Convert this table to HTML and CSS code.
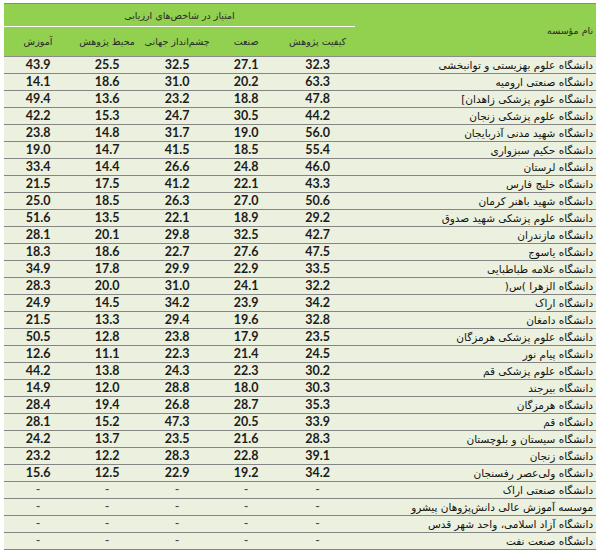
FILE: index.html
```html
<!DOCTYPE html>
<html lang="fa">
<head>
<meta charset="utf-8">
<link rel="stylesheet" href="styles.css">
</head>
<body>
<table class="grid" dir="rtl">
  <colgroup>
    <col class="c-name"><col class="c-q"><col class="c-ind"><col class="c-glob"><col class="c-env"><col class="c-edu">
  </colgroup>
  <thead>
    <tr class="h1">
      <th class="hname" rowspan="2">نام مؤسسه</th>
      <th class="hgroup" colspan="5">امتیاز در شاخص‌های ارزیابی</th>
    </tr>
    <tr class="h2">
      <th>کیفیت پژوهش</th>
      <th>صنعت</th>
      <th>چشم‌انداز جهانی</th>
      <th>محیط پژوهش</th>
      <th>آموزش</th>
    </tr>
  </thead>
  <tbody>
    <tr><td class="name">دانشگاه علوم بهزیستی و توانبخشی</td><td>32.3</td><td>27.1</td><td>32.5</td><td>25.5</td><td>43.9</td></tr>
    <tr><td class="name">دانشگاه صنعتی ارومیه</td><td>63.3</td><td>20.2</td><td>31.0</td><td>18.6</td><td>14.1</td></tr>
    <tr><td class="name">دانشگاه علوم پزشکی زاهدان]</td><td>47.8</td><td>18.8</td><td>23.2</td><td>13.6</td><td>49.4</td></tr>
    <tr><td class="name">دانشگاه علوم پزشکی زنجان</td><td>44.2</td><td>30.5</td><td>24.7</td><td>15.3</td><td>42.2</td></tr>
    <tr><td class="name">دانشگاه شهید مدنی آذربایجان</td><td>56.0</td><td>19.0</td><td>31.7</td><td>14.8</td><td>23.8</td></tr>
    <tr><td class="name">دانشگاه حکیم سبزواری</td><td>55.4</td><td>18.5</td><td>41.5</td><td>14.7</td><td>19.0</td></tr>
    <tr><td class="name">دانشگاه لرستان</td><td>46.0</td><td>24.8</td><td>26.6</td><td>14.4</td><td>33.4</td></tr>
    <tr><td class="name">دانشگاه خلیج فارس</td><td>43.3</td><td>22.1</td><td>41.2</td><td>17.5</td><td>21.5</td></tr>
    <tr><td class="name">دانشگاه شهید باهنر کرمان</td><td>50.6</td><td>27.0</td><td>26.3</td><td>18.5</td><td>25.0</td></tr>
    <tr><td class="name">دانشگاه علوم پزشکی شهید صدوق</td><td>29.2</td><td>18.9</td><td>22.1</td><td>13.5</td><td>51.6</td></tr>
    <tr><td class="name">دانشگاه مازندران</td><td>42.7</td><td>32.5</td><td>29.8</td><td>20.1</td><td>28.1</td></tr>
    <tr><td class="name">دانشگاه یاسوج</td><td>47.5</td><td>27.6</td><td>22.7</td><td>18.6</td><td>18.3</td></tr>
    <tr><td class="name">دانشگاه علامه طباطبایی</td><td>33.5</td><td>22.9</td><td>29.9</td><td>17.8</td><td>34.9</td></tr>
    <tr><td class="name">دانشگاه الزهرا )س(</td><td>32.2</td><td>24.1</td><td>31.0</td><td>20.0</td><td>28.3</td></tr>
    <tr><td class="name">دانشگاه اراک</td><td>34.2</td><td>23.9</td><td>34.2</td><td>14.5</td><td>24.9</td></tr>
    <tr><td class="name">دانشگاه دامغان</td><td>32.8</td><td>19.6</td><td>29.4</td><td>13.3</td><td>21.5</td></tr>
    <tr><td class="name">دانشگاه علوم پزشکی هرمزگان</td><td>23.5</td><td>17.9</td><td>23.8</td><td>12.8</td><td>50.5</td></tr>
    <tr><td class="name">دانشگاه پیام نور</td><td>24.5</td><td>21.4</td><td>22.3</td><td>11.1</td><td>12.6</td></tr>
    <tr><td class="name">دانشگاه علوم پزشکی قم</td><td>30.2</td><td>22.3</td><td>24.3</td><td>13.8</td><td>44.2</td></tr>
    <tr><td class="name">دانشگاه بیرجند</td><td>30.3</td><td>18.0</td><td>28.8</td><td>12.0</td><td>14.9</td></tr>
    <tr><td class="name">دانشگاه هرمزگان</td><td>35.3</td><td>28.7</td><td>26.8</td><td>19.4</td><td>28.4</td></tr>
    <tr><td class="name">دانشگاه قم</td><td>33.9</td><td>20.5</td><td>47.3</td><td>15.2</td><td>28.1</td></tr>
    <tr><td class="name">دانشگاه سیستان و بلوچستان</td><td>28.3</td><td>21.6</td><td>23.5</td><td>13.7</td><td>24.2</td></tr>
    <tr><td class="name">دانشگاه زنجان</td><td>39.1</td><td>22.8</td><td>28.3</td><td>12.2</td><td>23.2</td></tr>
    <tr><td class="name">دانشگاه ولی‌عصر رفسنجان</td><td>34.2</td><td>19.2</td><td>22.9</td><td>12.5</td><td>15.6</td></tr>
    <tr class="empty"><td class="name">دانشگاه صنعتی اراک</td><td>-</td><td>-</td><td>-</td><td>-</td><td>-</td></tr>
    <tr class="empty"><td class="name">موسسه آموزش عالی دانش‌پژوهان پیشرو</td><td>-</td><td>-</td><td>-</td><td>-</td><td>-</td></tr>
    <tr class="empty"><td class="name">دانشگاه آزاد اسلامی، واحد شهر قدس</td><td>-</td><td>-</td><td>-</td><td>-</td><td>-</td></tr>
    <tr class="empty"><td class="name">دانشگاه صنعت نفت</td><td>-</td><td>-</td><td>-</td><td>-</td><td>-</td></tr>
  </tbody>
</table>
</body>
</html>
```
FILE: styles.css
```css
html, body {
  margin: 0;
  padding: 0;
  background: #ffffff;
}
body {
  padding: 3px 0 0 4px;
  overflow: hidden;
}
.grid {
  width: 592px;
  border-collapse: collapse;
  table-layout: fixed;
  border-top: 1px solid #8a8a8a;
}
.c-name { width: 241px; }
.c-q { width: 75px; }
.c-ind { width: 68px; }
.c-glob { width: 70px; }
.c-env { width: 70px; }
.c-edu { width: 68px; }

.grid th {
  background: #92d050;
  font-family: "DejaVu Sans", sans-serif;
  font-weight: normal;
  font-size: 9.5px;
  color: #2a2a2a;
  padding: 0;
  text-align: center;
  vertical-align: middle;
}
.grid .h1 th { height: 22px; }
.grid .h2 th { height: 29px; border-bottom: 1px solid #8a8a8a; }
.grid .hgroup { border-bottom: 1px solid #ffffff; }
.grid .hname {
  text-align: right;
  padding-right: 3px;
  border-bottom: 1px solid #8a8a8a;
}
.grid td {
  background: #ebf1de;
  height: 16px;
  padding: 0;
  border-bottom: 1px solid #858585;
  text-align: center;
  font-family: "Lato", "Liberation Sans", sans-serif;
  font-weight: bold;
  font-size: 12.5px;
  color: #1c1c1c;
  line-height: 16px;
  white-space: nowrap;
  overflow: hidden;
}
.grid td.name {
  text-align: right;
  padding-right: 3px;
  font-family: "DejaVu Sans", sans-serif;
  font-weight: normal;
  font-size: 10.5px;
  color: #111111;
}
.grid .empty td:not(.name) {
  font-weight: normal;
  color: #444444;
}
```
